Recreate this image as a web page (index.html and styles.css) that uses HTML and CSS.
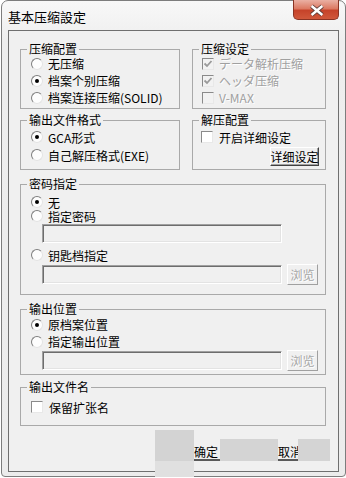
FILE: index.html
```html
<!DOCTYPE html>
<html lang="zh">
<head>
    <meta charset="UTF-8">
    <title>基本压缩設定</title>
    <link rel="stylesheet" href="styles.css">
</head>
<body>
    <div class="window">
        <!-- Title bar -->
        <div class="titlebar">
            <span class="title">基本压缩設定</span>
            <div class="close">
                <svg width="46" height="20" viewBox="0 0 46 20">
                    <path d="M19 6 L30 15 M30 6 L19 15" stroke="#5a3a36" stroke-width="4.4" fill="none"/>
                    <path d="M19 6 L30 15 M30 6 L19 15" stroke="#ffffff" stroke-width="2.6" fill="none"/>
                </svg>
            </div>
        </div>

        <div class="client">
            <!-- Compression -->
            <div class="pair">
                <fieldset class="group g1">
                    <legend>压缩配置</legend>
                    <div class="opt"><span class="radio"></span>无压缩</div>
                    <div class="opt"><span class="radio on"></span>档案个别压缩</div>
                    <div class="opt"><span class="radio"></span>档案连接压缩(SOLID)</div>
                </fieldset>
                <fieldset class="group g2">
                    <legend>压缩设定</legend>
                    <div class="opt off"><span class="check on"><svg width="10" height="10" viewBox="0 0 10 10"><path d="M1.5 4.5 L4 7 L8.5 2" stroke="#9a9a9a" stroke-width="1.8" fill="none"/></svg></span>データ解析压缩</div>
                    <div class="opt off"><span class="check on"><svg width="10" height="10" viewBox="0 0 10 10"><path d="M1.5 4.5 L4 7 L8.5 2" stroke="#9a9a9a" stroke-width="1.8" fill="none"/></svg></span>ヘッダ压缩</div>
                    <div class="opt off"><span class="check"></span>V-MAX</div>
                </fieldset>
            </div>

            <!-- Output format / extract -->
            <div class="pair second">
                <fieldset class="group g3">
                    <legend>输出文件格式</legend>
                    <div class="opt"><span class="radio on"></span>GCA形式</div>
                    <div class="opt"><span class="radio"></span>自己解压格式(EXE)</div>
                </fieldset>
                <fieldset class="group g4">
                    <legend>解压配置</legend>
                    <div class="opt"><span class="check white"></span>开启详细设定</div>
                    <div class="btn-row"><div class="btn detail">详细设定</div></div>
                </fieldset>
            </div>

            <!-- Password -->
            <fieldset class="group g5">
                <legend>密码指定</legend>
                <div class="opt"><span class="radio on"></span>无</div>
                <div class="opt"><span class="radio"></span>指定密码</div>
                <div class="field first"></div>
                <div class="opt key-opt"><span class="radio"></span>钥匙档指定</div>
                <div class="field-row">
                    <div class="field"></div>
                    <div class="btn browse">浏览</div>
                </div>
            </fieldset>

            <!-- Output location -->
            <fieldset class="group g6">
                <legend>输出位置</legend>
                <div class="opt"><span class="radio on"></span>原档案位置</div>
                <div class="opt"><span class="radio"></span>指定输出位置</div>
                <div class="field-row">
                    <div class="field"></div>
                    <div class="btn browse">浏览</div>
                </div>
            </fieldset>

            <!-- Output name -->
            <fieldset class="group g7">
                <legend>输出文件名</legend>
                <div class="opt"><span class="check white"></span>保留扩张名</div>
            </fieldset>

            <!-- OK / Cancel -->
            <div class="bottom">
                <div class="blot tall"></div>
                <div class="key">确定</div>
                <div class="blot"></div>
                <div class="key short">取消</div>
                <div class="blot end"></div>
            </div>
        </div>
    </div>
</body>
</html>
```

FILE: styles.css
```css
* {
    margin: 0;
    padding: 0;
    box-sizing: border-box;
}

body {
    background: #fff;
    font-family: "Noto Sans CJK SC", "Noto Sans", sans-serif;
    font-size: 12px;
    color: #000;
}

/* Window frame */
.window {
    margin-left: 1px;
    width: 345px;
    height: 477px;
    border: 1px solid #7d7d7d;
    border-radius: 7px 7px 4px 4px;
    background: linear-gradient(#f8f8f8, #eeeeee 40px, #ececec);
    display: flex;
    flex-direction: column;
}

.titlebar {
    height: 29px;
    flex: none;
    display: flex;
    align-items: flex-start;
}

.title {
    font-size: 13px;
    line-height: 13px;
    margin: 9px 0 0 6px;
}

.close {
    width: 46px;
    height: 20px;
    margin: -1px 6px 0 auto;
    border: 1px solid #8a3323;
    border-top: none;
    border-radius: 0 0 5px 5px;
    background: linear-gradient(#eab0a3, #dc7a63 45%, #c6432a 55%, #d0583b);
    display: flex;
}

.close svg {
    margin-left: -1px;
}

/* Client area */
.client {
    margin: 0 6px 4px;
    height: 442px;
    flex: none;
    border: 1px solid #6f6f6f;
    background: #f0f0f0;
    padding: 12px 12px 0 11px;
    display: flex;
    flex-direction: column;
}

.pair {
    display: grid;
    grid-template-columns: 160px 134px;
    column-gap: 12px;
}

.pair.second {
    margin-top: 5px;
}

/* Group boxes */
.group {
    border: 1px solid #a9a9a9;
    min-width: 0;
}

.group legend {
    margin-left: 6px;
    padding: 0 2px;
    font-size: 12px;
    line-height: 12px;
}

.opt {
    display: flex;
    align-items: center;
    height: 17px;
    padding-left: 10px;
    white-space: nowrap;
    line-height: 13px;
}

.opt.off {
    color: #a0a0a0;
    text-shadow: 1px 1px 0 #fff;
}

.g2 .opt {
    padding-left: 9px;
}

.g1, .g2 {
    padding-bottom: 2px;
}

.g3, .g4 {
    padding: 2px 0 3px;
}

.g3 .opt, .g4 .opt {
    height: 18px;
}

.g4 .opt {
    padding-left: 8px;
}

.g5 {
    margin-top: 8px;
    padding: 5px 0 9px;
}

.g5 .opt {
    height: 14px;
}

.g6 {
    margin-top: 8px;
    padding: 1px 0 3px;
}

.g7 {
    margin-top: 6px;
    padding: 5px 0 9px;
}

.g7 .opt {
    height: 18px;
}

/* Radio and check marks */
.radio {
    width: 12px;
    height: 12px;
    flex: none;
    margin-right: 5px;
    border-radius: 50%;
    border: 1px solid;
    border-color: #7e7e7e #e4e4e4 #e4e4e4 #7e7e7e;
    background: #fdfdfd;
    display: flex;
    align-items: center;
    justify-content: center;
}

.radio.on::after {
    content: "";
    width: 4px;
    height: 4px;
    border-radius: 50%;
    background: #000;
}

.check {
    width: 12px;
    height: 12px;
    flex: none;
    margin-right: 5px;
    border: 1px solid;
    border-color: #8a8a8a #e8e8e8 #e8e8e8 #8a8a8a;
    background: #f2f2f2;
    display: flex;
    align-items: center;
    justify-content: center;
}

.check.white {
    background: #fff;
    margin-right: 6px;
}

/* Text boxes and buttons */
.field {
    width: 240px;
    height: 19px;
    flex: none;
    border: 1px solid;
    border-color: #a0a0a0 #fff #fff #a0a0a0;
    box-shadow: inset 1px 1px #6d6d6d, inset -1px -1px #e3e3e3;
    background: #f0f0f0;
}

.field.first {
    margin: 1px 0 0 21px;
}

.key-opt {
    margin-top: 5px;
}

.field-row {
    display: flex;
    align-items: center;
    height: 21px;
    padding-left: 21px;
}

.g5 .field-row {
    margin-top: 2px;
}

.btn {
    display: flex;
    align-items: center;
    justify-content: center;
    border: 1px solid;
    border-color: #fff #404040 #404040 #fff;
    box-shadow: inset -1px -1px #a0a0a0;
    background: #f0f0f0;
    white-space: nowrap;
}

.btn.browse {
    width: 31px;
    height: 21px;
    margin-left: 5px;
    color: #a6a6a6;
    text-shadow: 1px 1px 0 #fff;
    border-color: #fff #a0a0a0 #a0a0a0 #fff;
    box-shadow: none;
}

.btn-row {
    display: flex;
    justify-content: flex-end;
    padding-right: 6px;
    margin-top: 1px;
}

.btn.detail {
    width: 49px;
    height: 19px;
    line-height: 14px;
}

/* Bottom buttons (rendering leftovers) */
.bottom {
    margin: 4px 0 0 135px;
    height: 43px;
    display: flex;
    align-items: flex-start;
}

.blot {
    width: 58px;
    height: 22px;
    margin-top: 9px;
    flex: none;
    background: #d4d4d4;
}

.blot.tall {
    width: 39px;
    height: 49px;
    margin-top: 0;
    background: linear-gradient(#d3d3d3 31px, #e0e0e0 31px);
}

.blot.end {
    width: 32px;
}

.key {
    width: 26px;
    margin-top: 15px;
    flex: none;
    line-height: 14px;
    white-space: nowrap;
    border-bottom: 2px solid #5a5a5a;
}

.key.short {
    width: 20px;
    overflow: hidden;
}
```
